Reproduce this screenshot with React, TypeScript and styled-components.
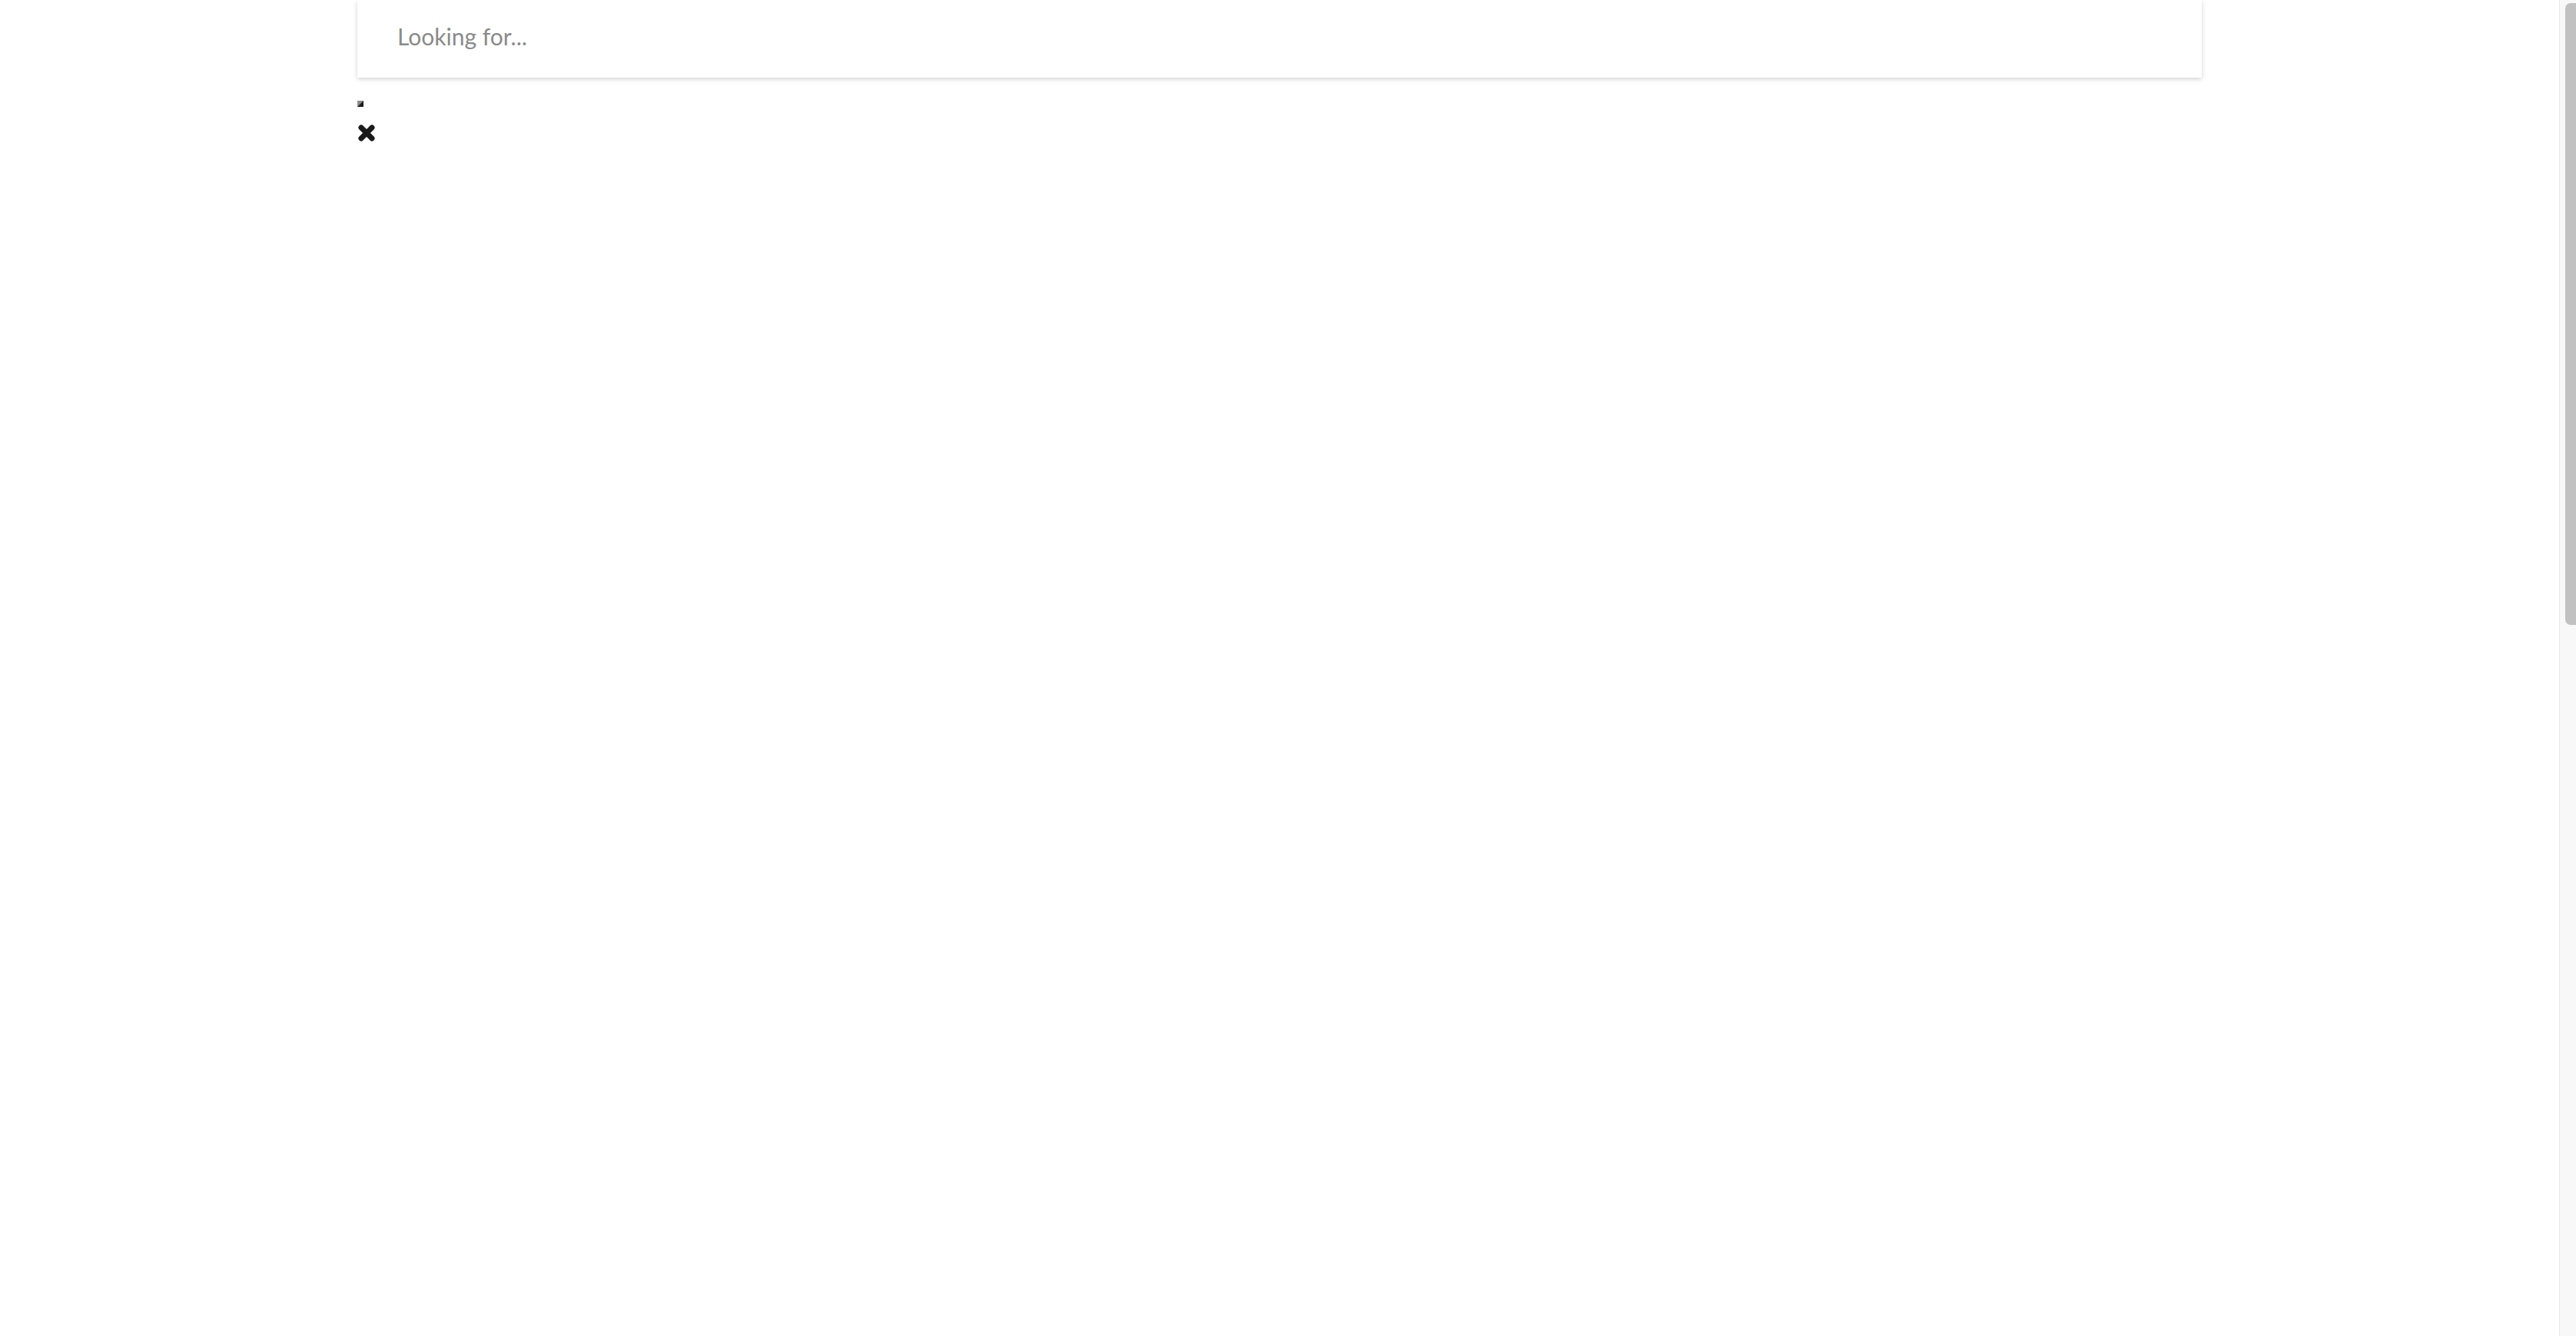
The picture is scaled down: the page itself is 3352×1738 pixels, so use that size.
import styled, { createGlobalStyle } from 'styled-components';

const GlobalStyle = createGlobalStyle`
  html, body {
    margin: 0;
    padding: 0;
    height: 100%;
    overflow: hidden;
    background: #ffffff;
    font-family: Lato, "Open Sans", sans-serif;
  }
`;

const Frame = styled.div`
  height: 100vh;
  display: flex;
`;

const Main = styled.div`
  flex: 1;
  overflow: hidden;
`;

// window scroll bar, drawn since the shot hides the native one
const Rail = styled.div`
  width: 22px;
  box-sizing: border-box;
  background: #f8f8f8;
  border-left: 1px solid #e6e6e6;
  padding: 4px 0 0 7px;
`;

const Thumb = styled.div<{ $length: number }>`
  height: ${p => p.$length}px;
  background: #c1c1c1;
  border-radius: 7px 0 0 7px;
`;

const Page = styled.div`
  min-height: 3748px;
  display: flex;
  justify-content: center;
`;

const Column = styled.div`
  width: 2400px;
  display: flex;
  flex-direction: column;
`;

const SearchBox = styled.div`
  height: 101px;
  background: #ffffff;
  box-shadow: 0 2px 6px rgba(0, 0, 0, 0.18);
  display: flex;
  align-items: center;
  padding: 0 52px;
`;

const SearchInput = styled.input`
  border: none;
  outline: none;
  width: 100%;
  background: transparent;
  font-family: Lato, "Open Sans", sans-serif;
  font-size: 30px;
  color: #333;
  padding: 0;
  margin-top: -7px;

  &::placeholder {
    color: #8a8a8a;
  }
`;

const Marker = styled.span`
  display: block;
  width: 8px;
  height: 8px;
  margin-top: 30px;
  background: linear-gradient(135deg, #8c8c8c 0%, #8c8c8c 48%, #1e1e1e 52%, #1e1e1e 100%);
`;

const CloseButton = styled.button`
  border: none;
  background: none;
  padding: 0;
  margin-top: 22px;
  width: 24px;
  height: 24px;
  display: flex;
  align-items: center;
  justify-content: center;
  cursor: pointer;
`;

const App = () => {
  return (
    <>
      <GlobalStyle />
      <Frame>
        <Main>
          <Page>
            <Column>
              <SearchBox>
                <SearchInput placeholder="Looking for..." />
              </SearchBox>
              <Marker />
              <CloseButton aria-label="close">
                <svg width="24" height="24" viewBox="0 0 24 24">
                  <path
                    d="M5 5 L19 19 M19 5 L5 19"
                    stroke="#1a1a1a"
                    strokeWidth="7"
                    strokeLinecap="round"
                  />
                </svg>
              </CloseButton>
            </Column>
          </Page>
        </Main>
        <Rail>
          <Thumb $length={809} />
        </Rail>
      </Frame>
    </>
  );
};

export default App;
